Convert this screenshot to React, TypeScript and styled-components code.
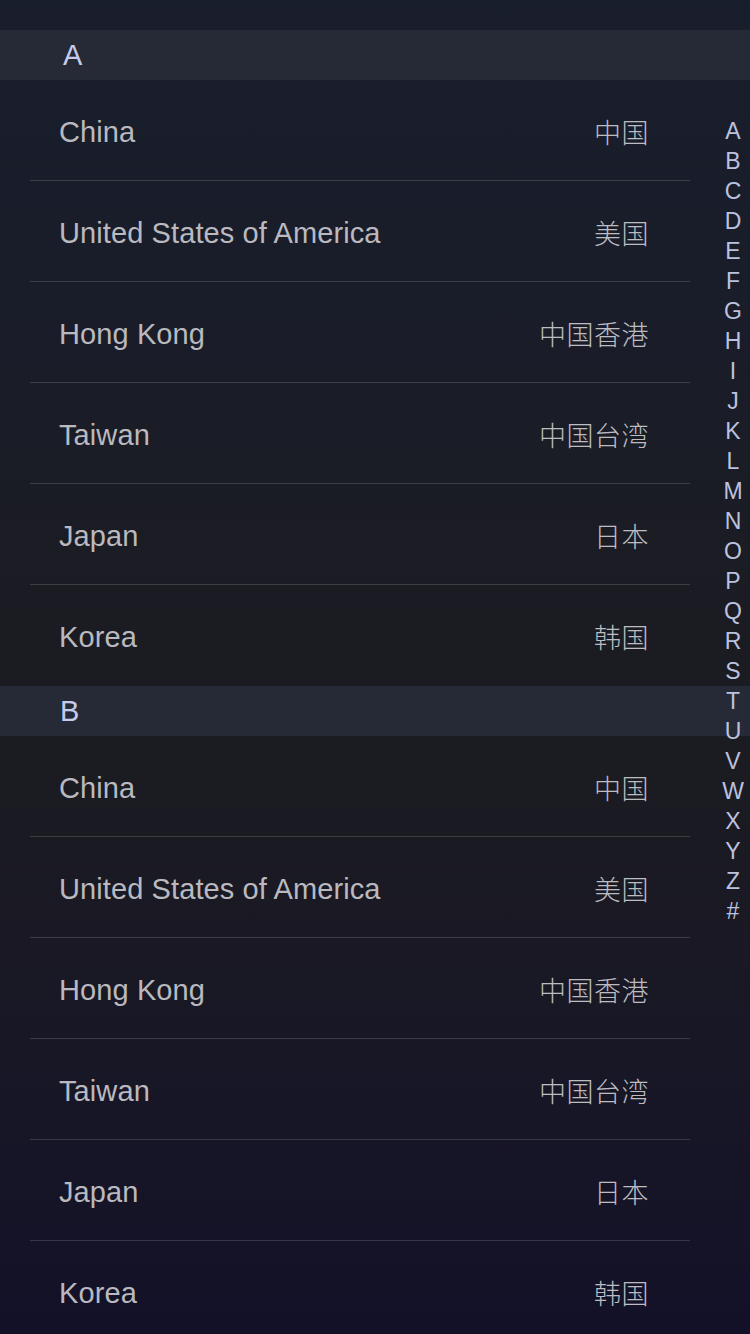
import React from "react";
import styled, { createGlobalStyle } from "styled-components";

const GlobalStyle = createGlobalStyle`
  html, body {
    margin: 0;
    padding: 0;
    background: #161622;
  }
  * { box-sizing: border-box; }
`;

const Screen = styled.div`
  position: relative;
  width: 750px;
  height: 1334px;
  overflow: hidden;
  padding-top: 30px;
  background: linear-gradient(
    180deg,
    #191e2c 0%,
    #191d2a 20%,
    #1b1c23 45%,
    #1b1b22 58%,
    #181726 80%,
    #131128 100%
  );
  font-family: "Liberation Sans", Arial, "Noto Sans CJK SC", sans-serif;
`;

const SectionHeader = styled.div<{ $indent: number }>`
  height: 50px;
  display: flex;
  align-items: center;
  padding-left: ${(p) => p.$indent}px;
  background: #262a36;
  color: #c6cbec;
  font-size: 29px;
`;

const RowList = styled.div`
  display: flex;
  flex-direction: column;
  padding-left: 30px;
  width: 690px;
`;

const Row = styled.div`
  height: 101px;
  display: flex;
  align-items: center;
  justify-content: space-between;
  padding: 4px 41px 0 29px;
  border-bottom: 1px solid rgba(255, 255, 255, 0.15);
  &:last-child {
    border-bottom-color: transparent;
  }
`;

const EnName = styled.span`
  color: #b9b9bf;
  font-size: 29px;
  letter-spacing: 0.1px;
`;

const CnName = styled.span`
  color: #bcbcc1;
  font-family: "Noto Sans CJK SC", sans-serif;
  font-size: 27px;
  font-weight: 300;
  letter-spacing: 0.5px;
  margin-top: -2px;
`;

const IndexBar = styled.ul`
  position: absolute;
  top: 116px;
  right: 4px;
  width: 26px;
  margin: 0;
  padding: 0;
  list-style: none;
  display: flex;
  flex-direction: column;
  align-items: center;
`;

const IndexItem = styled.li`
  height: 30px;
  line-height: 30px;
  color: #bcc1df;
  font-size: 23px;
  text-align: center;
`;

const countries = [
  { en: "China", cn: "中国" },
  { en: "United States of America", cn: "美国" },
  { en: "Hong Kong", cn: "中国香港" },
  { en: "Taiwan", cn: "中国台湾" },
  { en: "Japan", cn: "日本" },
  { en: "Korea", cn: "韩国" },
];

const sections = [
  { letter: "A", indent: 63 },
  { letter: "B", indent: 60 },
];

const letters = "ABCDEFGHIJKLMNOPQRSTUVWXYZ#".split("");

export default function App() {
  return (
    <>
      <GlobalStyle />
      <Screen>
        {sections.map((s) => (
          <section key={s.letter}>
            <SectionHeader $indent={s.indent}>{s.letter}</SectionHeader>
            <RowList>
              {countries.map((c) => (
                <Row key={c.en}>
                  <EnName>{c.en}</EnName>
                  <CnName>{c.cn}</CnName>
                </Row>
              ))}
            </RowList>
          </section>
        ))}
        <IndexBar>
          {letters.map((l) => (
            <IndexItem key={l}>{l}</IndexItem>
          ))}
        </IndexBar>
      </Screen>
    </>
  );
}
